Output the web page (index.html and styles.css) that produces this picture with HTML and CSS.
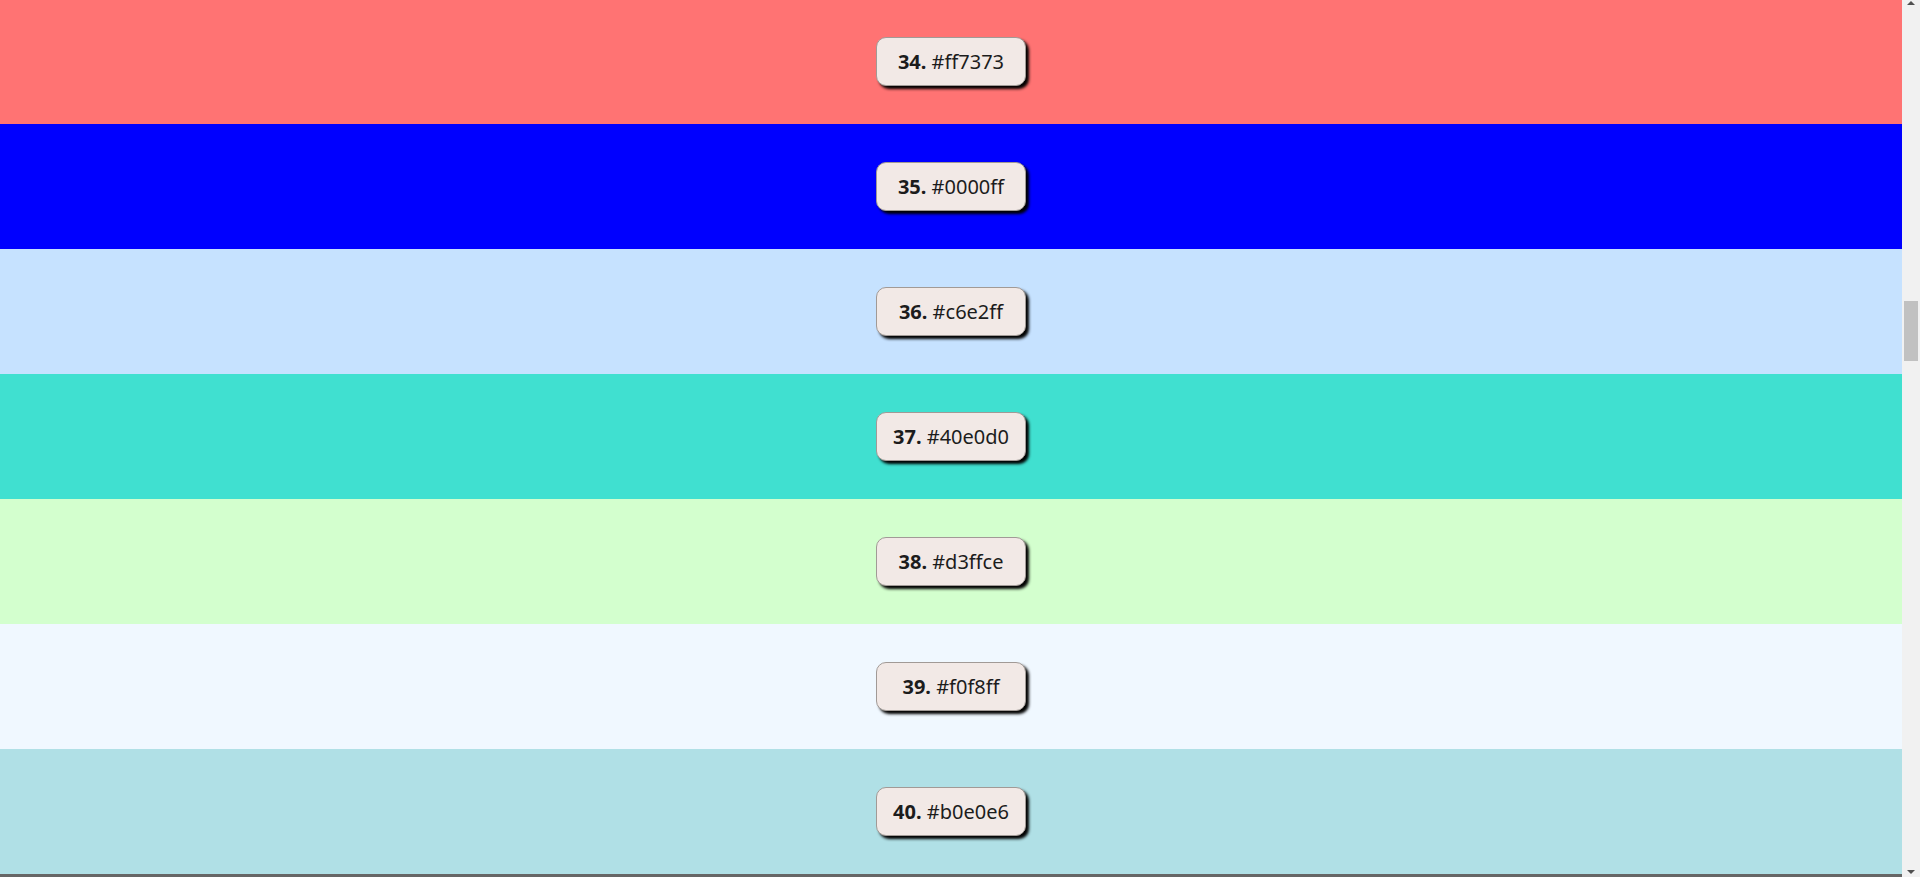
FILE: index.html
```html
<!DOCTYPE html>
<html lang="en">
<head>
<meta charset="utf-8">
<title>Colors</title>
<link rel="stylesheet" href="styles.css">
</head>
<body>
<div class="page">
  <main class="swatches">
    <section class="swatch first" style="background:#ff7373"><div class="label"><b>34.</b> #ff7373</div></section>
    <section class="swatch" style="background:#0000ff"><div class="label"><b>35.</b> #0000ff</div></section>
    <section class="swatch" style="background:#c6e2ff"><div class="label"><b>36.</b> #c6e2ff</div></section>
    <section class="swatch" style="background:#40e0d0"><div class="label"><b>37.</b> #40e0d0</div></section>
    <section class="swatch" style="background:#d3ffce"><div class="label"><b>38.</b> #d3ffce</div></section>
    <section class="swatch" style="background:#f0f8ff"><div class="label"><b>39.</b> #f0f8ff</div></section>
    <section class="swatch" style="background:#b0e0e6"><div class="label"><b>40.</b> #b0e0e6</div></section>
    <section class="swatch-peek" style="background:#666666"></section>
  </main>
  <aside class="scrollbar">
    <div class="arrow up"></div>
    <div class="track"><div class="thumb"></div></div>
    <div class="arrow down"></div>
  </aside>
</div>
</body>
</html>
```

FILE: styles.css
```css
html, body {
  margin: 0;
  padding: 0;
  height: 100%;
  overflow: hidden;
}
body {
  font-family: "Noto Sans", "Open Sans", sans-serif;
  color: #1c1c1c;
}
.page {
  display: flex;
  height: 877px;
}
.swatches {
  flex: 1;
  display: flex;
  flex-direction: column;
  overflow: hidden;
}
.swatch {
  flex: 0 0 125px;
  display: flex;
  align-items: center;
  justify-content: center;
}
.swatch.first {
  margin-top: -1px;
}
.swatch-peek {
  flex: 1 0 3px;
}
.label {
  box-sizing: border-box;
  width: 150px;
  text-align: center;
  background: #f2e9e6;
  border: 1px solid #a19a96;
  border-radius: 10px;
  box-shadow: 3px 3px 3px #000;
  padding: 10px 0;
  font-size: 20px;
  line-height: 27px;
  white-space: nowrap;
}
.label b {
  font-weight: bold;
}
.scrollbar {
  flex: 0 0 18px;
  background: #f1f1f1;
  display: flex;
  flex-direction: column;
  align-items: center;
}
.arrow {
  width: 0;
  height: 0;
  border-left: 4px solid transparent;
  border-right: 4px solid transparent;
}
.arrow.up {
  margin-top: 1px;
  border-bottom: 4px solid #505050;
}
.arrow.down {
  margin-bottom: 3px;
  border-top: 4px solid #505050;
}
.track {
  flex: 1;
  align-self: stretch;
  padding: 0 2px;
}
.thumb {
  margin-top: 296px;
  height: 60px;
  background: #c1c1c1;
}
```
